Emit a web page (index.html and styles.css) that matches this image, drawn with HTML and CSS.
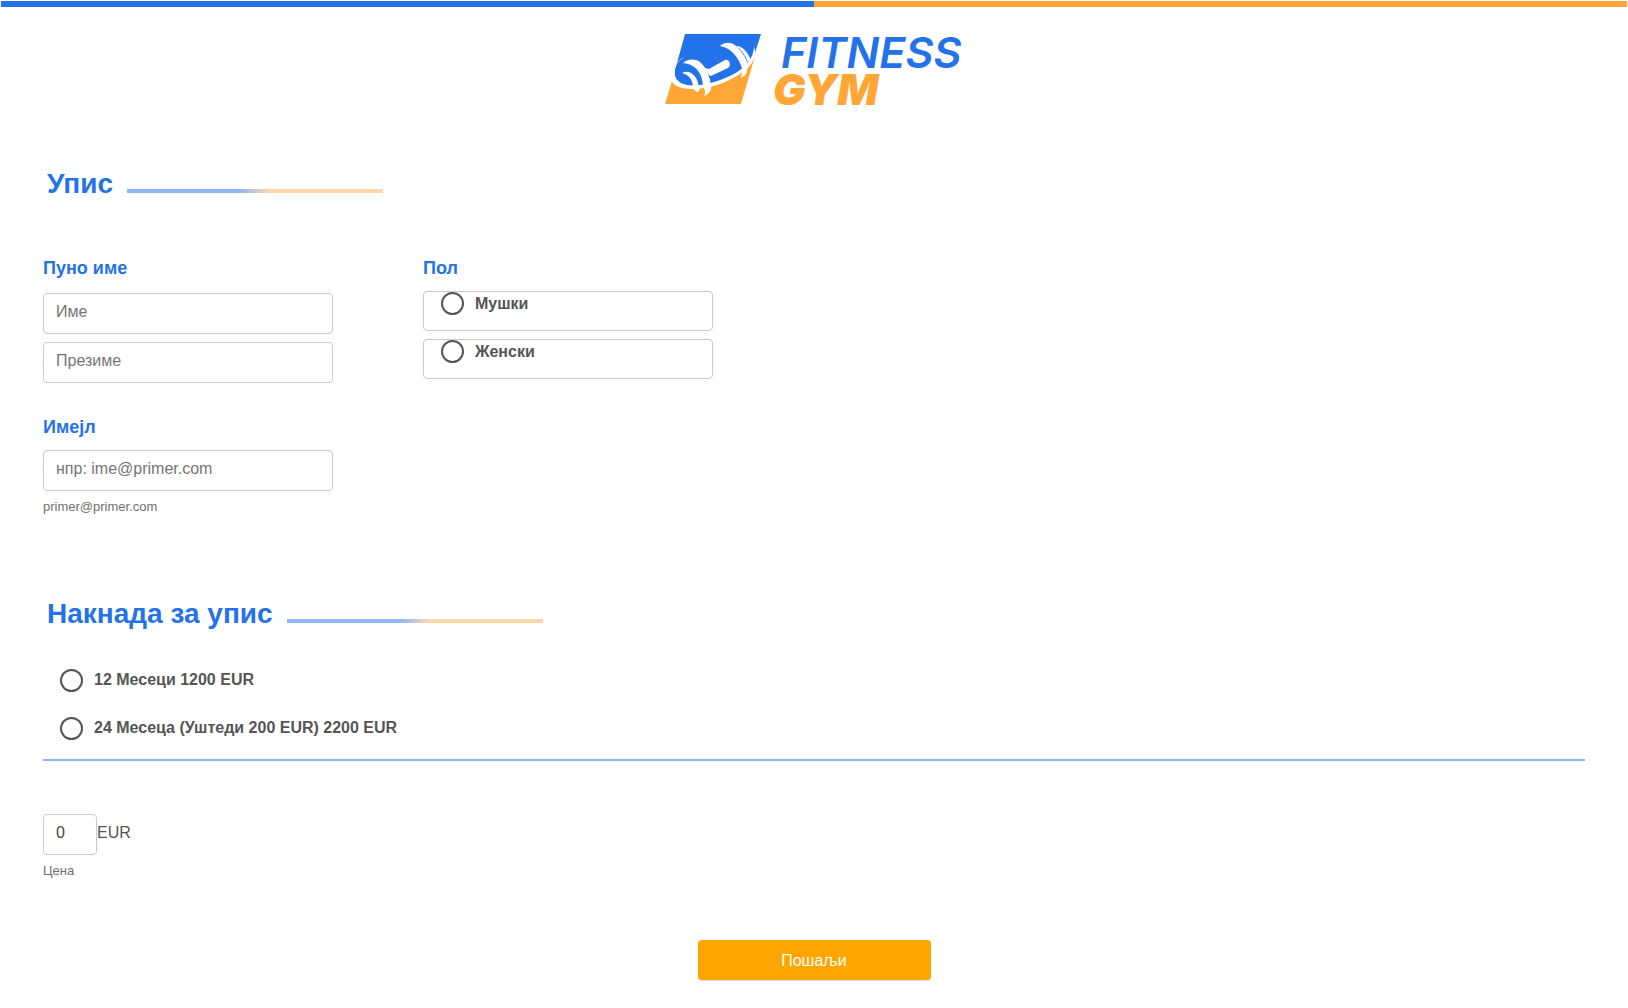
FILE: index.html
```html
<!DOCTYPE html>
<html lang="sr">
<head>
<meta charset="utf-8">
<meta name="viewport" content="width=device-width, initial-scale=1">
<title>Fitness Gym – Упис</title>
<link rel="stylesheet" href="styles.css">
</head>
<body>
<div class="stripe"></div>
<header class="brand">
  <svg class="brand-mark" viewBox="0 0 96 70" aria-hidden="true">
    <path fill="#2472ea" d="M20 0H96L89 22C80 40 40 55 20 51C10 49 7 41 12 29Z"/>
    <path fill="#ffa636" d="M7 47C14 57 38 56 57 49C74 42 84 34 90 22L76 70H0Z"/>
    <path fill="#fff" d="M20 23C14 26 11 30 10 35C8 42 12 49 22 51C34 53 47 50 59 45C76 38 88 28 89 13C91 18 90 22 89 25C82 38 66 46 55 50C34 57 13 57 7 48C5 42 8 36 12 29C14 26 17 24 20 23Z"/>
    <path fill="#fff" d="M18 29C22 25 31 24 36 29C42 35 45 43 46 51L38 53C38 45 35 31 18 29Z"/>
    <path fill="#fff" d="M17 39C24 35 33 41 34 54L28 54C28 47 25 41 17 39Z"/>
    <path fill="#fff" d="M40 34L44 35L60 26C64 24 67 31 63 34L46 42C44 42 42 38 40 34Z"/>
    <path fill="#fff" d="M55 12C61 7 68 8 73 14C79 20 82 27 84 33L78 38C76 29 70 15 55 12Z"/>
    <path fill="#fff" d="M71 12C79 12 84 20 87 29L84 32C82 24 78 17 71 12Z"/>
    <path fill="#fff" d="M39 53L46 51C47 56 44 60 39 62C40 60 41 57 39 55ZM29 54L34 54C35 56 34 58 31 58C31 57 30 56 29 56ZM77 36L82 32C83 38 81 42 75 44C77 41 77 39 77 36Z"/>
  </svg>
  <div class="brand-name">
    <span class="brand-fitness">FITNESS</span>
    <span class="brand-gym">GYM</span>
  </div>
</header>

<form class="form">
  <h1 class="section-title">Упис</h1>

  <div class="fields">
    <div class="column">
      <fieldset class="field">
        <legend class="label label-name">Пуно име</legend>
        <div class="stack">
          <input class="input" type="text" placeholder="Име" aria-label="Име">
          <input class="input" type="text" placeholder="Презиме" aria-label="Презиме">
        </div>
      </fieldset>
      <div class="field">
        <label class="label" for="email">Имејл</label>
        <input class="input" id="email" type="email" placeholder="нпр: ime@primer.com" aria-describedby="email-hint">
        <span class="hint" id="email-hint">primer@primer.com</span>
      </div>
    </div>
    <fieldset class="field">
      <legend class="label">Пол</legend>
      <div class="stack">
        <label class="option option-boxed"><input class="radio" type="radio" name="pol"><span>Мушки</span></label>
        <label class="option option-boxed"><input class="radio" type="radio" name="pol"><span>Женски</span></label>
      </div>
    </fieldset>
  </div>

  <h2 class="section-title">Накнада за упис</h2>

  <div class="plans">
    <label class="option"><input class="radio" type="radio" name="plan"><span>12 Месеци 1200 EUR</span></label>
    <label class="option"><input class="radio" type="radio" name="plan"><span>24 Месеца (Уштеди 200 EUR) 2200 EUR</span></label>
  </div>

  <div class="price">
    <div class="price-row">
      <input class="input input-price" id="price" type="text" value="0">
      <span class="unit">EUR</span>
    </div>
    <label class="hint" for="price">Цена</label>
  </div>

  <button class="submit" type="submit">Пошаљи</button>
</form>
</body>
</html>
```

FILE: styles.css
```css
* {
  box-sizing: border-box;
}

body {
  margin: 0;
  background: #fff;
  color: #555;
  font-family: "Liberation Sans", Arial, sans-serif;
  font-size: 16px;
  line-height: 20px;
}

.stripe {
  height: 6px;
  margin: 1px 1px 0;
  background: linear-gradient(to right, #2472ea 50%, #ffa636 50%);
}

.brand {
  display: flex;
  justify-content: center;
  gap: 12px;
  padding-top: 27px;
}

.brand-mark {
  width: 96px;
  height: 70px;
}

.brand-name {
  display: flex;
  flex-direction: column;
  min-width: 190px;
  font-family: Inter, sans-serif;
  font-size: 43px;
  font-style: italic;
  line-height: 37px;
}

.brand-fitness {
  padding-left: 8px;
  color: #2472ea;
  font-weight: 600;
}

.brand-gym {
  color: #ffa636;
  font-weight: 900;
}

.form {
  display: flex;
  flex-direction: column;
  padding: 60px 43px 28px;
}

.section-title {
  display: flex;
  align-items: baseline;
  gap: 14px;
  margin: 0 4px;
  color: #2472ea;
  font-size: 28px;
  line-height: 32px;
}

.section-title::after {
  content: "";
  width: 256px;
  height: 4px;
  background: linear-gradient(to right, #8fb6f6 44%, #ffd8a8 56%);
}

.fields {
  display: flex;
  gap: 90px;
  padding: 58px 0 83px;
}

.column {
  display: flex;
  flex-direction: column;
  gap: 34px;
}

.field {
  display: flex;
  flex-direction: column;
  width: 290px;
  margin: 0;
  padding: 0;
  border: 0;
}

.label {
  margin-bottom: 13px;
  padding: 0;
  color: #2472ea;
  font-size: 18px;
  font-weight: bold;
  line-height: 20px;
}

.label-name {
  margin-bottom: 15px;
}

.stack {
  display: flex;
  flex-direction: column;
  gap: 8px;
}

.input {
  width: 100%;
  height: 41px;
  padding: 0 12px 4px;
  border: 1px solid #c9cacd;
  border-radius: 4px;
  background: #fff;
  color: #444;
  font: inherit;
}

.input::placeholder {
  color: #757575;
  opacity: 1;
}

.hint {
  margin-top: 8px;
  color: #6f6f6f;
  font-size: 13px;
  line-height: 16px;
}

.option {
  display: flex;
  align-items: center;
  gap: 11px;
  height: 24px;
  padding-left: 17px;
  font-weight: bold;
}

.option-boxed {
  align-items: flex-start;
  height: 40px;
  border: 1px solid #c9cacd;
  border-radius: 4px;
  line-height: 24px;
}

.radio {
  flex: none;
  width: 23px;
  height: 23px;
  margin: 0;
  border: 2px solid #555;
  border-radius: 50%;
  background: #fff;
  appearance: none;
}

.radio:checked {
  background: #2472ea;
}

.plans {
  display: flex;
  flex-direction: column;
  gap: 24px;
  padding: 38px 0 19px;
  border-bottom: 2px solid #8fb6f6;
}

.price {
  display: flex;
  flex-direction: column;
  padding-top: 53px;
}

.price-row {
  display: flex;
}

.input-price {
  width: 54px;
}

.unit {
  padding-top: 9px;
}

.submit {
  align-self: center;
  width: 233px;
  height: 40px;
  margin-top: 61px;
  padding: 2px 0 0;
  border: 0;
  border-radius: 4px;
  background: #ffa500;
  box-shadow: 0 1px 1px #ddd;
  color: #fff;
  font: inherit;
}
```
